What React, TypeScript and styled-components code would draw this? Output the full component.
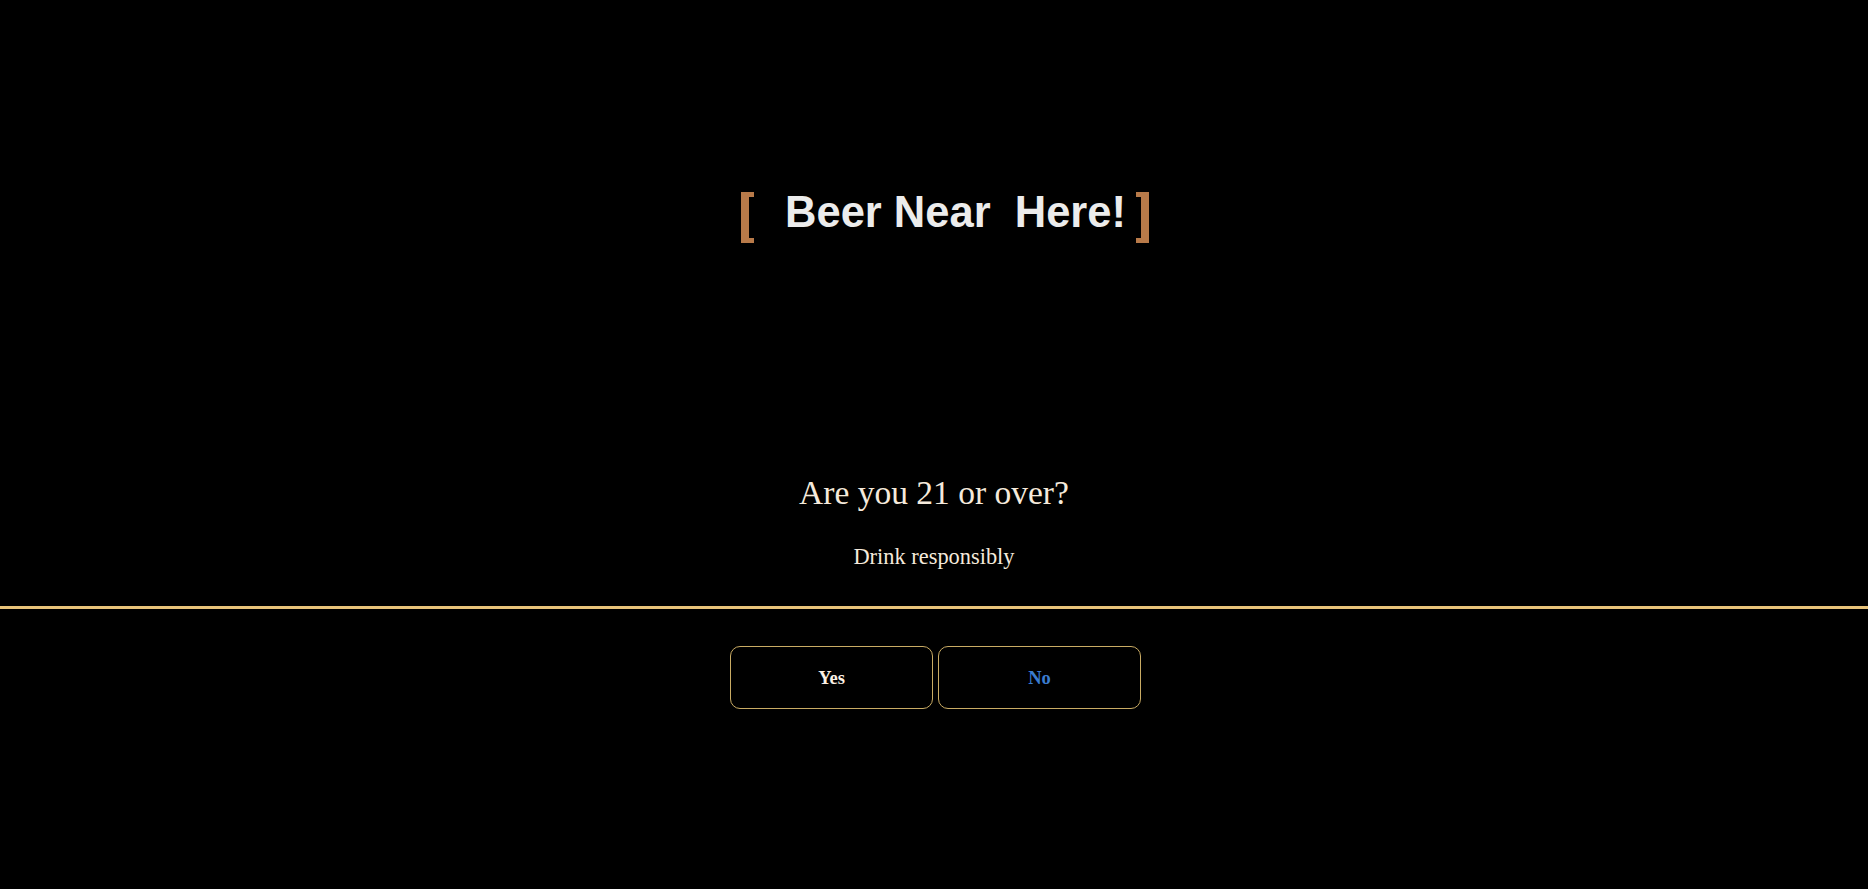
import React from "react";
import styled, { createGlobalStyle } from "styled-components";

const GlobalStyle = createGlobalStyle`
  html, body {
    margin: 0;
    padding: 0;
    background: #000;
  }
  body {
    font-family: "Liberation Serif", "Times New Roman", serif;
    min-height: 889px;
  }
  #root {
    background: #000;
    min-height: 889px;
  }
`;

const Page = styled.main`
  display: flex;
  flex-direction: column;
  align-items: center;
  padding-top: 192px;
  background: #000;
  min-height: 889px;
  box-sizing: border-box;
`;

const LogoRow = styled.div`
  display: flex;
  align-items: flex-start;
  margin-left: 22px;
`;

const Bracket = styled.span<{ $side: "left" | "right" }>`
  display: block;
  width: 13px;
  height: 51px;
  box-sizing: border-box;
  border: 0 solid #b87a49;
  border-top-width: 5px;
  border-bottom-width: 5px;
  ${(p) => (p.$side === "left" ? "border-left-width: 8px;" : "border-right-width: 8px;")}
`;

const LogoText = styled.h1`
  margin: 0 10px 0 31px;
  font-family: "Liberation Sans", Arial, sans-serif;
  font-weight: 700;
  font-size: 43.5px;
  line-height: 41px;
  color: #ececec;
  white-space: pre;
`;

const Question = styled.h2`
  margin: 231px 0 0;
  font-family: "Liberation Serif", "Times New Roman", serif;
  font-weight: 400;
  font-size: 33.5px;
  line-height: 1.15;
  color: #f5eadc;
`;

const Note = styled.p`
  margin: 31px 0 0;
  font-family: "Liberation Serif", "Times New Roman", serif;
  font-size: 22.4px;
  line-height: 1.15;
  color: #f5eadc;
`;

const Divider = styled.hr`
  align-self: stretch;
  margin: 37px 0 0;
  height: 3px;
  border: 0;
  background: #e8c37a;
`;

const ButtonRow = styled.div`
  display: flex;
  gap: 5px;
  margin-top: 37px;
  margin-left: 3px;
`;

const Choice = styled.button<{ $tone: "yes" | "no" }>`
  width: 203px;
  height: 63px;
  box-sizing: border-box;
  padding: 2px 0 0;
  background: #000;
  border: 1px solid #c9ab64;
  border-radius: 10px;
  font-family: "Liberation Serif", "Times New Roman", serif;
  font-weight: 700;
  font-size: 18.5px;
  color: ${(p) => (p.$tone === "yes" ? "#fbf1e4" : "#3a7ccf")};
  cursor: pointer;
`;

export default function App() {
  return (
    <>
      <GlobalStyle />
      <Page>
        <LogoRow>
          <Bracket $side="left" />
          <LogoText>{"Beer Near  Here!"}</LogoText>
          <Bracket $side="right" />
        </LogoRow>
        <Question>Are you 21 or over?</Question>
        <Note>Drink responsibly</Note>
        <Divider />
        <ButtonRow>
          <Choice $tone="yes">Yes</Choice>
          <Choice $tone="no">No</Choice>
        </ButtonRow>
      </Page>
    </>
  );
}
